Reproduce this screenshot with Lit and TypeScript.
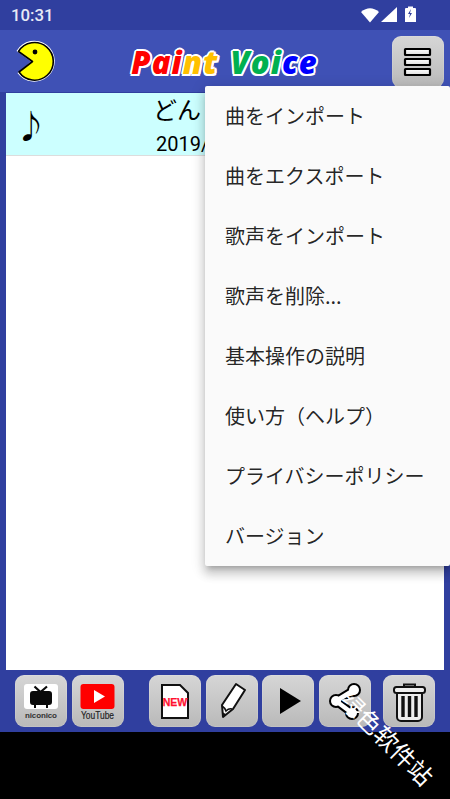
import { LitElement, html, css, svg } from "lit";
import { customElement } from "lit/decorators.js";

const MENU = ["曲をインポート","曲をエクスポート","歌声をインポート","歌声を削除...","基本操作の説明","使い方（ヘルプ）","プライバシーポリシー","バージョン"];

@customElement("app-root")
export class AppRoot extends LitElement {
  static styles = css`
    :host { display:flex; flex-direction:column; width:450px; height:799px; position:relative; overflow:hidden; background:#303f9f; font-family:"Noto Sans CJK JP","Noto Sans",sans-serif; }
    .status { height:30px; flex:none; background:#303f9f; display:flex; align-items:center; padding:0 0 0 11px; box-sizing:border-box; color:#e8eaf6; font:500 16.8px Roboto,sans-serif; justify-content:space-between; }
    .status svg { display:block; }
    .toolbar { height:62px; flex:none; background:#3f51b5; display:flex; align-items:center; padding:0 6px 0 15px; box-sizing:border-box; }
    .pac { flex:none; display:block; }
    .title { flex:1; text-align:center; font:italic 800 31px "Open Sans",sans-serif; letter-spacing:1.1px; word-spacing:3px; line-height:40px; padding-top:2px; white-space:pre;
      text-shadow:2px 0 0 #fff,-2px 0 0 #fff,0 2px 0 #fff,0 -2px 0 #fff,1.5px 1.5px 0 #fff,-1.5px 1.5px 0 #fff,1.5px -1.5px 0 #fff,-1.5px -1.5px 0 #fff; }
    .r{color:#f00}.o{color:#ffc000}.g{color:#00b050}.b{color:#00f}
    .btn { flex:none; width:52px; height:52px; border-radius:9px; background:linear-gradient(#d6d6d6,#b9b9b9); display:block; box-shadow:inset 0 0 0 1px rgba(255,255,255,.12); }
    .btn svg { display:block; }
    .toolbar .btn { margin-top:2px; }
    .list { flex:1; margin:1px 6px 0; background:#fff; min-height:0; }
    .row { height:63px; box-sizing:border-box; background:#ccffff; border-bottom:1px solid #ddd; display:flex; align-items:center; padding-left:9px; color:#000; }
    .note { width:138px; font:32px/60px "Noto Sans CJK JP",sans-serif; flex:none; }
    .texts { display:flex; flex-direction:column; padding-top:2px; }
    .t1 { font-size:24px; line-height:34px; }
    .t2 { font:20px/28px Roboto,sans-serif; padding-left:3px; margin-top:4px; }
    .bottom { height:62px; flex:none; display:flex; gap:4.5px; padding:5px 0 0 15px; box-sizing:border-box; background:#303f9f; }
    .sp1 { margin-left:21px; }
    .sp2 { margin-left:8px; }
    .nav { height:67px; flex:none; background:#000; }
    .menu { position:absolute; left:205px; top:86px; right:0; background:#fafafa; border-radius:2px; box-shadow:0 8px 10px 1px rgba(0,0,0,.14),0 3px 14px 2px rgba(0,0,0,.12),0 5px 5px -3px rgba(0,0,0,.2); }
    .item { height:60px; line-height:60px; padding-left:20px; font-size:20px; color:rgba(0,0,0,.87); white-space:nowrap; }
    .mark { position:absolute; left:327px; top:726px; width:120px; text-align:center; transform:rotate(45deg); color:#fff; font:24px/24px "Noto Sans CJK SC",sans-serif; white-space:nowrap; }
    .lbl { font-family:"Liberation Sans",sans-serif; }
  `;

  render() {
    return html`
      <div class="status">
        <span>10:31</span>
        <svg width="95" height="30" viewBox="0 0 95 30">
          <path d="M6 12 Q15 4.500 24 12 L15 22.500 Z" fill="#fff"/>
          <path d="M42 7 V22 H26 Z" fill="#fff"/>
          <path d="M51 8 h2 v-1.500 h5 v1.500 h2 a1 1 0 0 1 1 1 v13 h-11 v-13 a1 1 0 0 1 1 -1 Z" fill="#fff"/>
          <path d="M56 9 l-3 5 h2 l-1 4 l3 -5 h-2 Z" fill="#303f9f"/>
        </svg>
      </div>
      <div class="toolbar">
        <svg class="pac" width="42" height="46" viewBox="15 38 42 46">
          <path d="M31 61.500 L16.500 51 A20.500 20.500 0 1 1 17.500 73 Z" fill="#fff"/>
          <path d="M32.500 61.500 L18.500 51.500 A18.800 18.800 0 1 1 19 72 Z" fill="#ff0" stroke="#000" stroke-width="1.6" stroke-linejoin="round"/>
          <circle cx="35" cy="52" r="2.4" fill="#000"/>
        </svg>
        <div class="title"><span class="r">Pai</span><span class="o">nt</span> <span class="g">Voi</span><span class="b">ce</span></div>
        <div class="btn">
          <svg width="52" height="52" viewBox="0 0 52 52">
            <defs><linearGradient id="bar" x1="0" y1="0" x2="0" y2="1"><stop offset="0" stop-color="#fff"/><stop offset="1" stop-color="#ddd"/></linearGradient></defs>
            ${[12,22,32].map(y => svg`<rect x="13" y="${y+1}" width="25" height="6" fill="url(#bar)" stroke="#000" stroke-width="2.2" rx=".5"/>`)}
          </svg>
        </div>
      </div>
      <div class="list">
        <div class="row">
          <div class="note">♪</div>
          <div class="texts"><div class="t1">どん</div><div class="t2">2019/</div></div>
        </div>
      </div>
      <div class="bottom">
        <div class="btn"><svg width="52" height="52" viewBox="0 0 52 52">
          <rect x="9" y="9" width="34" height="25" rx="3" fill="#fff"/>
          <path d="M19.500 11.500 L25.500 17 L32 11.500" fill="none" stroke="#0a0a0a" stroke-width="2.200" />
          <path d="M18 16 H34 a3 3 0 0 1 3 3 V27 a3 3 0 0 1 -3 3 H33 V33 H31 V30 H21 V33 H19 V30 H18 a3 3 0 0 1 -3 -3 V19 a3 3 0 0 1 3 -3 Z" fill="#0a0a0a"/>
          <text class="lbl" x="26" y="43" text-anchor="middle" font-size="8" font-weight="700" fill="#333" textLength="32">niconico</text>
        </svg></div>
        <div class="btn"><svg width="52" height="52" viewBox="0 0 52 52">
          <rect x="8.500" y="9" width="34" height="25" rx="3" fill="#f00"/>
          <path d="M22 15 L33 21.500 L22 28 Z" fill="#fff"/>
          <text class="lbl" x="25.500" y="43.500" text-anchor="middle" font-size="11" fill="#222" stroke="#222" stroke-width=".2" textLength="33" lengthAdjust="spacingAndGlyphs">YouTube</text>
        </svg></div>
        <div class="btn sp1"><svg width="52" height="52" viewBox="0 0 52 52">
          <path d="M13 10 H31 L39 18 V43 H13 Z" fill="#fff" stroke="#111" stroke-width="2"/>
          <text class="lbl" x="26" y="31" text-anchor="middle" font-size="10.500" font-weight="700" fill="#ff1030" stroke="#ff1030" stroke-width=".25">NEW</text>
        </svg></div>
        <div class="btn"><svg width="52" height="52" viewBox="0 0 52 52">
          <path d="M30 9 L39 15 L27 34 L17 42 L16 30 Z" fill="#fff" stroke="#111" stroke-width="2" stroke-linejoin="round"/>
          <path d="M16 31 Q19 33 20 36 Q23 33 26 34" fill="none" stroke="#111" stroke-width="1.600"/>
          <path d="M17 42 L16.300 37 L20.500 39.500 Z" fill="#111"/>
        </svg></div>
        <div class="btn"><svg width="52" height="52" viewBox="0 0 52 52"><path d="M18 13 L39 26 L18 39 Z" fill="#000"/></svg></div>
        <div class="btn"><svg width="52" height="52" viewBox="0 0 52 52">
          <path d="M35 15 L17 26 L33 38" fill="none" stroke="#000" stroke-width="8.500" stroke-linecap="round" stroke-linejoin="round"/>
          <circle cx="35" cy="15" r="7" fill="#000"/><circle cx="17" cy="26" r="7" fill="#000"/><circle cx="33" cy="38" r="7" fill="#000"/>
          <path d="M35 15 L17 26 L33 38" fill="none" stroke="#fff" stroke-width="4.500" stroke-linecap="round" stroke-linejoin="round"/>
          <circle cx="35" cy="15" r="5" fill="#fff"/><circle cx="17" cy="26" r="5" fill="#fff"/><circle cx="33" cy="38" r="5" fill="#fff"/>
        </svg></div>
        <div class="btn sp2"><svg width="52" height="52" viewBox="0 0 52 52">
          <path d="M21 12 V9.500 H32 V12" fill="none" stroke="#111" stroke-width="2"/>
          <rect x="11" y="12" width="31" height="6" rx="2.500" fill="#eee" stroke="#111" stroke-width="2"/>
          <path d="M14 18 H39 V42 a4 4 0 0 1 -4 4 H18 a4 4 0 0 1 -4 -4 Z" fill="#eee" stroke="#111" stroke-width="2"/>
          <path d="M20 21 V42 M26.500 21 V42 M33 21 V42" stroke="#111" stroke-width="3.400"/>
        </svg></div>
      </div>
      <div class="nav"></div>
      <div class="menu">${MENU.map(m => html`<div class="item">${m}</div>`)}</div>
      <div class="mark">绿色软件站</div>
    `;
  }
}
